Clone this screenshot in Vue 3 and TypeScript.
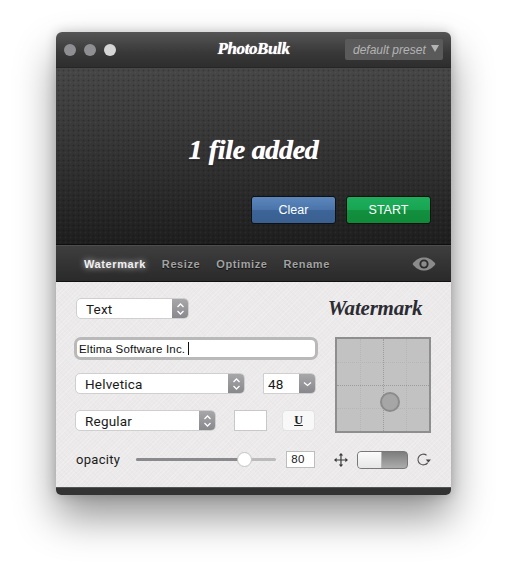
<template>
  <div class="page">
    <div class="window">
      <header class="titlebar">
        <div class="lights">
          <span class="light"></span>
          <span class="light"></span>
          <span class="light on"></span>
        </div>
        <div class="logo">PhotoBulk</div>
        <div class="preset">
          <span>default preset</span>
          <i class="preset-arrow"></i>
        </div>
      </header>

      <section class="drop">
        <h1 class="added">1 file added</h1>
        <div class="actions">
          <button class="btn blue">Clear</button>
          <button class="btn green">START</button>
        </div>
      </section>

      <nav class="tabs">
        <a v-for="t in tabs" :key="t" class="tab" :class="{ active: t === 'Watermark' }">{{ t }}</a>
        <svg class="eye" width="24" height="14" viewBox="0 0 24 14">
          <path d="M0.5 7C4 2.2 8 0.5 12 0.5S20 2.2 23.5 7C20 11.8 16 13.5 12 13.5S4 11.8 0.5 7Z" fill="#8b8b8b" />
          <circle cx="12" cy="7" r="4.6" fill="#2c2c2c" />
          <circle cx="12" cy="7" r="2.7" fill="#8b8b8b" />
        </svg>
      </nav>

      <main class="panel">
        <div class="left">
          <div class="select type">
            <span>Text</span>
            <b class="stepper"><svg width="9" height="14" viewBox="0 0 9 14"><path d="M1.5 5L4.5 2L7.5 5M1.5 9L4.5 12L7.5 9" fill="none" stroke="#fff" stroke-width="1.3" /></svg></b>
          </div>

          <div class="text-field">
            <span>Eltima Software Inc.</span><i class="caret"></i>
          </div>

          <div class="row font-row">
            <div class="select font">
              <span>Helvetica</span>
              <b class="stepper"><svg width="9" height="14" viewBox="0 0 9 14"><path d="M1.5 5L4.5 2L7.5 5M1.5 9L4.5 12L7.5 9" fill="none" stroke="#fff" stroke-width="1.3" /></svg></b>
            </div>
            <div class="select size">
              <span>48</span>
              <b class="stepper"><svg width="9" height="6" viewBox="0 0 9 6"><path d="M1 1.5L4.5 4.5L8 1.5" fill="none" stroke="#fff" stroke-width="1.3" /></svg></b>
            </div>
          </div>

          <div class="row style-row">
            <div class="select weight">
              <span>Regular</span>
              <b class="stepper"><svg width="9" height="14" viewBox="0 0 9 14"><path d="M1.5 5L4.5 2L7.5 5M1.5 9L4.5 12L7.5 9" fill="none" stroke="#fff" stroke-width="1.3" /></svg></b>
            </div>
            <div class="swatch"></div>
            <button class="underline">U</button>
          </div>
        </div>

        <div class="right">
          <div class="wm-title">Watermark</div>
          <div class="position">
            <i class="guide v a"></i>
            <i class="guide v b"></i>
            <i class="guide v c"></i>
            <i class="guide h a"></i>
            <i class="guide h b"></i>
            <i class="guide h c"></i>
            <i class="knob"></i>
          </div>
        </div>

        <div class="bottom">
          <span class="opacity-label">opacity</span>
          <div class="slider">
            <i class="slider-fill" :style="{ width: sliderPos + '%' }"></i>
            <i class="slider-thumb" :style="{ left: sliderPos + '%' }"></i>
          </div>
          <div class="opacity-value">{{ opacity }}</div>
          <svg class="move" width="14" height="14" viewBox="0 0 14 14">
            <path d="M7 1V13M1 7H13" stroke="#3a3a3a" stroke-width="1.2" fill="none" />
            <path d="M7 0L9.2 2.6H4.8ZM7 14L4.8 11.4H9.2ZM0 7L2.6 4.8V9.2ZM14 7L11.4 9.2V4.8Z" fill="#3a3a3a" />
          </svg>
          <div class="toggle"><i class="toggle-on"></i></div>
          <svg class="rotate" width="14" height="14" viewBox="0 0 14 14">
            <path d="M9.6 2.2A5.4 5.4 0 1 0 10.8 9.6" fill="none" stroke="#555" stroke-width="1.1" />
            <path d="M8.8 6.6H14L11.4 9.6Z" fill="#444" />
          </svg>
        </div>
      </main>

      <footer class="foot"></footer>
    </div>
  </div>
</template>

<script setup lang="ts">
const tabs: string[] = ['Watermark', 'Resize', 'Optimize', 'Rename']
const opacity = 80
// the thumb sits a little left of the value, the track has end caps
const sliderPos = 77
</script>

<style>
html,
body {
  background: #fff;
}
</style>

<style scoped>
.page {
  width: 507px;
  height: 575px;
  padding: 32px 56px 0;
  box-sizing: border-box;
  overflow: hidden;
  font-family: "Liberation Sans", Arial, sans-serif;
}

.window {
  width: 395px;
  height: 463px;
  display: flex;
  flex-direction: column;
  border-radius: 6px 6px 5px 5px;
  overflow: hidden;
  box-shadow: 0 22px 40px rgba(0, 0, 0, 0.42), 0 0 12px rgba(0, 0, 0, 0.2);
}

.titlebar {
  height: 36px;
  flex: none;
  box-sizing: border-box;
  display: grid;
  grid-template-columns: 1fr auto 1fr;
  align-items: center;
  padding: 0 8px;
  background: linear-gradient(#555, #383838 60%, #2e2e2e);
  border-bottom: 1px solid #262626;
}

.lights {
  display: flex;
  gap: 8px;
}

.light {
  width: 12px;
  height: 12px;
  border-radius: 50%;
  background: #8f8f93;
}

.light.on {
  background: #d6d6d6;
}

.logo {
  font: italic bold 17px "Liberation Serif", serif;
  letter-spacing: -0.4px;
  color: #fff;
  text-shadow: 0 0 1px #fff;
  margin-top: -1px;
}

.preset {
  justify-self: end;
  width: 98px;
  height: 21px;
  box-sizing: border-box;
  display: flex;
  align-items: center;
  justify-content: space-between;
  padding: 0 4px 0 8px;
  background: #5a5a5a;
  border-radius: 2px;
  color: #b4b4b4;
  font-size: 12px;
  font-style: italic;
  white-space: nowrap;
}

.preset-arrow {
  width: 0;
  height: 0;
  margin-bottom: 2px;
  border-left: 4px solid transparent;
  border-right: 4px solid transparent;
  border-top: 7px solid #b4b4b4;
}

.drop {
  height: 177px;
  flex: none;
  box-sizing: border-box;
  display: flex;
  flex-direction: column;
  padding: 59px 20px 0;
  background:
    radial-gradient(circle, rgba(0, 0, 0, 0.22) 0.8px, transparent 1.1px) 0 0 / 5px 5px,
    radial-gradient(circle, rgba(255, 255, 255, 0.04) 0.8px, transparent 1.1px) 2px 2px / 5px 5px,
    linear-gradient(#474747, #1e1e1e);
  border-bottom: 1px solid #0e0e0e;
}

.added {
  margin: 0;
  text-align: center;
  font: italic bold 28px/46px "Liberation Serif", serif;
  letter-spacing: -0.3px;
  color: #fff;
  text-shadow: 0 0 1px #fff, 0 1px 2px rgba(0, 0, 0, 0.6);
}

.actions {
  display: flex;
  justify-content: flex-end;
  gap: 10px;
  margin-top: 23px;
}

.btn {
  width: 85px;
  height: 28px;
  padding: 0;
  border: 1px solid #111;
  border-radius: 3px;
  color: #fff;
  font: 12.5px "Liberation Sans", Arial, sans-serif;
}

.blue {
  background: linear-gradient(#5c87bd, #4a74a9 50%, #3c6497 52%, #3a6090);
}

.green {
  background: linear-gradient(#1dae5c, #18a552 50%, #12903f 52%, #0f8a38);
}

.tabs {
  height: 37px;
  flex: none;
  box-sizing: border-box;
  display: flex;
  align-items: center;
  gap: 16px;
  padding: 0 15px 0 28px;
  background: linear-gradient(#3e3e3e, #2a2a2a);
  border-top: 1px solid #4d4d4d;
  border-bottom: 1px solid #111;
}

.tab {
  font: bold 11px "Liberation Sans", sans-serif;
  letter-spacing: 0.6px;
  color: #a2a2a2;
  text-shadow: 0 1px 1px #111;
}

.tab.active {
  color: #f2f2f2;
  text-shadow: 0 0 6px rgba(255, 255, 255, 0.75);
}

.eye {
  margin-left: auto;
}

.panel {
  height: 205px;
  flex: none;
  box-sizing: border-box;
  position: relative;
  display: grid;
  grid-template-columns: 241px 96px;
  grid-template-rows: 151px 1fr;
  column-gap: 19px;
  padding: 16px 20px 0 19px;
  color: #1a1a1a;
  background:
    repeating-linear-gradient(135deg, rgba(255, 255, 255, 0.22) 0 1px, transparent 1px 3px),
    repeating-linear-gradient(45deg, rgba(0, 0, 0, 0.012) 0 1px, transparent 1px 4px),
    #ebe9e9;
}

.left {
  display: flex;
  flex-direction: column;
  align-items: flex-start;
}

.select {
  height: 21px;
  box-sizing: border-box;
  display: flex;
  align-items: center;
  justify-content: space-between;
  padding-left: 9px;
  background: #fff;
  border: 1px solid #cfcfcf;
  border-radius: 5px;
  font-family: Roboto, sans-serif;
  font-size: 13.5px;
  letter-spacing: 0.2px;
  overflow: hidden;
}

.stepper {
  width: 16px;
  height: 21px;
  flex: none;
  display: flex;
  align-items: center;
  justify-content: center;
  background: linear-gradient(#a9a9ac, #87878b);
}

.type {
  width: 113px;
  margin-left: 1px;
}

.text-field {
  width: 238px;
  height: 17px;
  margin: 21px 0 0 2px;
  padding-left: 2px;
  box-sizing: border-box;
  display: flex;
  align-items: center;
  background: #fff;
  border-radius: 4px;
  outline: 3px solid #b9b9b9;
  font-size: 11.5px;
  letter-spacing: 0.2px;
  color: #111;
}

.caret {
  width: 1px;
  height: 13px;
  margin-left: 3px;
  background: #111;
}

.row {
  display: flex;
  align-items: center;
}

.font-row {
  margin-top: 16px;
  gap: 18px;
}

.font {
  width: 170px;
}

.size {
  width: 53px;
  border-radius: 0 5px 5px 0;
  padding-left: 4px;
}

.style-row {
  margin-top: 16px;
}

.weight {
  width: 141px;
}

.swatch {
  width: 33px;
  height: 21px;
  margin-left: 18px;
  box-sizing: border-box;
  background: #fff;
  border: 1px solid #c8c8c8;
}

.underline {
  width: 33px;
  height: 21px;
  margin-left: 15px;
  padding: 0;
  background: #f8f8f8;
  border: 1px solid #e2e2e2;
  border-radius: 4px;
  font: bold 12px "Liberation Serif", serif;
  text-decoration: underline;
  color: #222;
}

.right {
  display: flex;
  flex-direction: column;
  align-items: center;
}

.wm-title {
  height: 39px;
  margin-right: 16px;
  font: italic bold 21px/20px "Liberation Serif", serif;
  letter-spacing: -0.2px;
  color: #2b2b33;
}

.position {
  width: 96px;
  height: 96px;
  box-sizing: border-box;
  position: relative;
  background: #c3c2c2;
  border: 2px solid #8e8e8e;
}

.guide {
  position: absolute;
}

.guide.v {
  top: 0;
  bottom: 0;
  border-left: 1px dotted #b6b6b6;
}

.guide.h {
  left: 0;
  right: 0;
  border-top: 1px dotted #b6b6b6;
}

.guide.v.a { left: 23px; }
.guide.v.b { left: 46px; border-left-color: #9c9c9c; }
.guide.v.c { left: 69px; }
.guide.h.a { top: 23px; }
.guide.h.b { top: 46px; border-top-color: #9c9c9c; }
.guide.h.c { top: 69px; }

.knob {
  position: absolute;
  left: 43px;
  top: 53px;
  width: 20px;
  height: 20px;
  box-sizing: border-box;
  border-radius: 50%;
  background: #a6a6a6;
  border: 2px solid #8b8b8b;
}

.bottom {
  grid-column: 1 / 3;
  display: flex;
  align-items: center;
  height: 21px;
  padding-left: 1px;
}

.opacity-label {
  width: 60px;
  font-family: Roboto, sans-serif;
  font-size: 13px;
  letter-spacing: 0.3px;
}

.slider {
  width: 141px;
  height: 3px;
  position: relative;
  background: #bbb;
  border-radius: 2px;
}

.slider-fill {
  position: absolute;
  left: 0;
  top: 0;
  bottom: 0;
  background: #8a8a8e;
  border-radius: 2px;
}

.slider-thumb {
  position: absolute;
  top: -6px;
  width: 15px;
  height: 15px;
  margin-left: -7px;
  box-sizing: border-box;
  border-radius: 50%;
  background: #fff;
  border: 1px solid #c4c4c4;
}

.opacity-value {
  width: 29px;
  height: 17px;
  margin-left: 10px;
  box-sizing: border-box;
  padding-left: 4px;
  background: #fff;
  border: 1px solid #bdbdbd;
  font-size: 11.5px;
  line-height: 15px;
  letter-spacing: 0.3px;
}

.move {
  margin-left: 19px;
}

.toggle {
  width: 51px;
  height: 18px;
  margin-left: 9px;
  box-sizing: border-box;
  background: linear-gradient(#7d7d7d, #acacac);
  border: 1px solid #787878;
  border-radius: 4px;
  overflow: hidden;
}

.toggle-on {
  display: block;
  width: 23px;
  height: 100%;
  background: linear-gradient(#fbfbfb, #e6e6e6);
  border-right: 1px solid #b5b5b5;
}

.rotate {
  margin-left: 9px;
}

.foot {
  flex: 1;
  background: #333;
  border-top: 1px solid #555;
}
</style>
